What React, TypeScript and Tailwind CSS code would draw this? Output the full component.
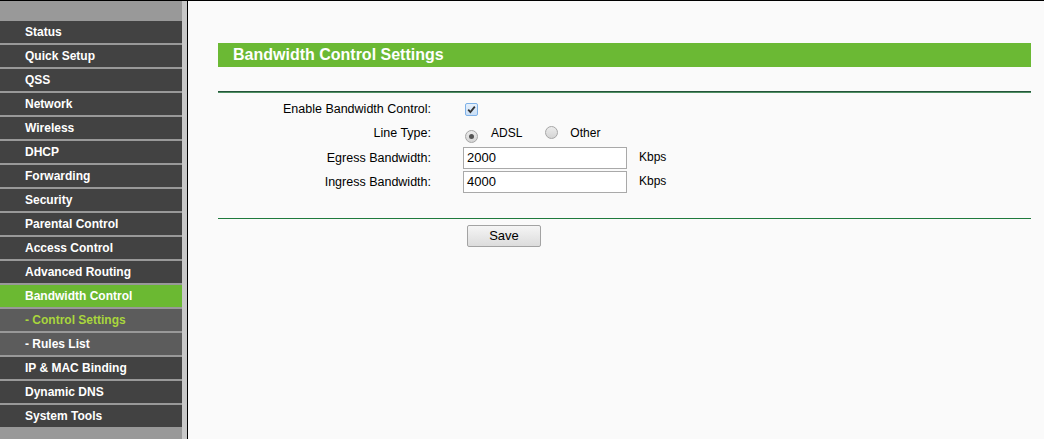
import React from "react";

const items: { label: string; kind: "main" | "active" | "sub" | "subActive" }[] = [
  { label: "Status", kind: "main" },
  { label: "Quick Setup", kind: "main" },
  { label: "QSS", kind: "main" },
  { label: "Network", kind: "main" },
  { label: "Wireless", kind: "main" },
  { label: "DHCP", kind: "main" },
  { label: "Forwarding", kind: "main" },
  { label: "Security", kind: "main" },
  { label: "Parental Control", kind: "main" },
  { label: "Access Control", kind: "main" },
  { label: "Advanced Routing", kind: "main" },
  { label: "Bandwidth Control", kind: "active" },
  { label: "- Control Settings", kind: "subActive" },
  { label: "- Rules List", kind: "sub" },
  { label: "IP & MAC Binding", kind: "main" },
  { label: "Dynamic DNS", kind: "main" },
  { label: "System Tools", kind: "main" },
];

function Radio({ checked }: { checked?: boolean }) {
  return (
    <span className="inline-flex h-[13px] w-[13px] items-center justify-center rounded-full border border-[#a6a6a6] bg-gradient-to-b from-[#ececec] to-[#d4d4d4]">
      {checked && <span className="h-[5px] w-[5px] rounded-full bg-[#555]" />}
    </span>
  );
}

export default function App() {
  return (
    <div
      className="flex h-[439px] w-[1044px] overflow-hidden border-t border-black bg-[#fafafa] text-[12px] text-black"
      style={{ fontFamily: '"Liberation Sans", Arial, sans-serif' }}
    >
      {/* Sidebar */}
      <div className="flex h-full shrink-0">
        <div className="flex w-[182px] flex-col bg-[#999999]">
          <div className="h-[20px] shrink-0" />
          {items.map((it) => {
            const bg =
              it.kind === "active"
                ? "bg-[#6bb932]"
                : it.kind === "main"
                ? "bg-[#424242]"
                : "bg-[#5c5c5c]";
            const color = it.kind === "subActive" ? "text-[#a9d63c]" : "text-white";
            return (
              <div key={it.label} className="h-[24px] shrink-0 pb-[2px]">
                <div
                  className={`flex h-[22px] items-center pl-[25px] font-bold ${bg} ${color}`}
                >
                  {it.label}
                </div>
              </div>
            );
          })}
        </div>
        <div className="w-[5px] bg-[#c8c8c8]" />
        <div className="w-[1px] bg-black" />
      </div>

      {/* Content */}
      <div className="flex-1 pl-[30px] pt-[42px]">
        <div className="w-[813px]">
          <div className="flex h-[24px] items-center bg-[#6bb934] pl-[15px] text-[16px] font-bold text-white">
            Bandwidth Control Settings
          </div>
          <div className="mt-[24px] h-[2px] border-t border-b border-t-[#24553a] border-b-[#4f8f62]" />
          <div className="mt-[4px] grid grid-cols-[213px_1fr] gap-x-[32px]">
            <div className="flex h-[24px] items-center justify-end text-[12.5px]">Enable Bandwidth Control:</div>
            <div className="flex h-[24px] items-center pl-[2px]">
              <span className="flex h-[13px] w-[13px] items-center justify-center rounded-[2px] border border-[#7eb1e8] bg-gradient-to-b from-[#e6f1fc] to-[#c9def5]">
                <svg width="9" height="9" viewBox="0 0 9 9">
                  <path d="M1.2 4.6 L3.4 7 L7.8 1.6" fill="none" stroke="#333" strokeWidth="1.8" />
                </svg>
              </span>
            </div>

            <div className="flex h-[25px] items-center justify-end text-[12.5px]">Line Type:</div>
            <div className="flex h-[25px] items-center pl-[2px]">
              <span className="mt-[2px]">
                <Radio checked />
              </span>
              <span className="ml-[13px] -mt-[2px]">ADSL</span>
              <span className="ml-[23px] mt-[2px]">
                <Radio />
              </span>
              <span className="ml-[12px] -mt-[2px]">Other</span>
            </div>

            <div className="flex h-[24px] items-center justify-end text-[12.5px]">Egress Bandwidth:</div>
            <div className="flex h-[24px] items-center">
              <div className="flex h-[22px] w-[164px] items-center border border-[#a9a9a9] bg-white pl-[3px] text-[13px]">
                2000
              </div>
              <span className="ml-[12px] -mt-[3px]">Kbps</span>
            </div>

            <div className="flex h-[24px] items-center justify-end text-[12.5px]">Ingress Bandwidth:</div>
            <div className="flex h-[24px] items-center">
              <div className="flex h-[22px] w-[164px] items-center border border-[#a9a9a9] bg-white pl-[3px] text-[13px]">
                4000
              </div>
              <span className="ml-[12px] -mt-[3px]">Kbps</span>
            </div>
          </div>
          <div className="mt-[24px] h-[1px] bg-[#1f7a3c]" />
          <div className="mt-[6px] pl-[249px]">
            <div className="flex h-[22px] w-[74px] items-center justify-center rounded-[2px] border border-[#a3a3a3] bg-gradient-to-b from-[#f5f5f5] to-[#dcdcdc] text-[13px]">
              Save
            </div>
          </div>
        </div>
      </div>
    </div>
  );
}
